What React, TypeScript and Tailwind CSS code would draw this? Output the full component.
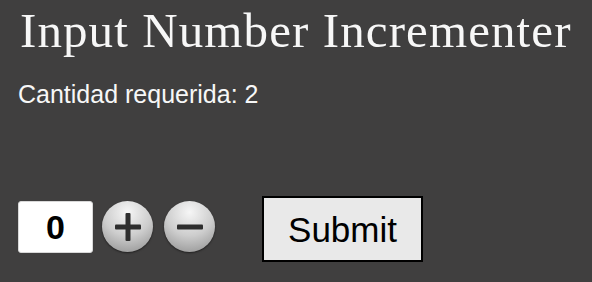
import { useState } from "react";

function RoundButton({ kind, onClick }: { kind: "plus" | "minus"; onClick: () => void }) {
  return (
    <button
      type="button"
      onClick={onClick}
      className="w-[51px] h-[51px] rounded-full flex items-center justify-center bg-radial-[circle_at_50%_22%] from-[#f6f6f6] via-[#cdcdcd] to-[#8c8c8c] shadow-[0_1px_2px_rgba(0,0,0,0.5)]"
    >
      <svg width="30" height="30" viewBox="0 0 30 30">
        <rect x="2" y="12.5" width="26" height="5" rx="1" fill="#2e2e2e" />
        {kind === "plus" && <rect x="12.5" y="1" width="5" height="28" rx="1" fill="#2e2e2e" />}
      </svg>
    </button>
  );
}

export default function App() {
  const [count, setCount] = useState(0);

  return (
    <div className="w-[592px] h-[282px] bg-[#403f3f] text-[#f7f7f7] pl-[18px] pt-[6px] overflow-hidden">
      <h1 className="ml-[2px] text-[49px] leading-[49px] tracking-[1.1px] font-['Liberation_Serif',serif]">
        Input Number Incrementer
      </h1>
      <p className="mt-[25px] text-[25px] leading-[28px] font-['Liberation_Sans',Arial,sans-serif]">
        Cantidad requerida: 2
      </p>

      {/* Incrementer row */}
      <div className="mt-[88px] h-[66px] flex items-center font-['Liberation_Sans',Arial,sans-serif]">
        <input
          type="text"
          readOnly
          value={count}
          className="w-[75px] h-[52px] mt-[-4px] rounded-[3px] bg-white border border-[#d8d8d8] text-center text-[34px] font-bold text-black outline-none font-['Liberation_Sans',Arial,sans-serif]"
        />
        <div className="ml-[9px] mt-[-5px]">
          <RoundButton kind="plus" onClick={() => setCount((c) => c + 1)} />
        </div>
        <div className="ml-[11px] mt-[-5px]">
          <RoundButton kind="minus" onClick={() => setCount((c) => Math.max(0, c - 1))} />
        </div>
        <button
          type="button"
          className="ml-[47px] w-[161px] h-[66px] border-2 border-black bg-[#e9e9e9] text-black text-[35px] leading-none"
        >
          Submit
        </button>
      </div>
    </div>
  );
}
